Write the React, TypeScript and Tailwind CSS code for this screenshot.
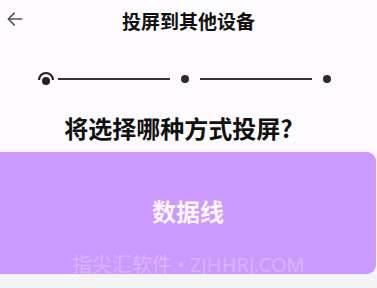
import React from 'react';

const font = { fontFamily: '"Noto Sans CJK SC", "Noto Sans", sans-serif' };

function Stepper() {
  return (
    <div className="flex items-center h-[18px] pl-[36px] pr-[46px]">
      <svg width="20" height="18" viewBox="0 0 20 18" className="shrink-0">
        <path d="M3 10 A7 7 0 0 1 17 10" fill="none" stroke="#222" strokeWidth="2.2" />
        <circle cx="10" cy="11" r="4" fill="#222" />
      </svg>
      <div className="flex-1 h-[2px] bg-[#333] ml-[2px]" />
      <div className="w-[8px] h-[8px] rounded-full bg-[#2a2a2a] mx-[11px]" />
      <div className="flex-1 h-[2px] bg-[#333]" />
      <div className="w-[8px] h-[8px] rounded-full bg-[#2a2a2a] ml-[11px]" />
    </div>
  );
}

export default function App() {
  return (
    <div className="w-[377px] h-[288px] overflow-hidden bg-[#fdfbfd] flex flex-col relative" style={font}>
      {/* header */}
      <div className="h-[38px] flex items-center relative">
        <svg width="20" height="20" viewBox="0 0 24 24" className="absolute left-[5px] top-[9px]" fill="none" stroke="#555" strokeWidth="2" strokeLinecap="round" strokeLinejoin="round">
          <path d="M20 12H5" />
          <path d="M11 5l-7 7 7 7" />
        </svg>
        <div className="flex-1 text-center text-[19px] font-bold text-[#111] leading-none pt-[2px]">投屏到其他设备</div>
      </div>

      <div className="mt-[32px]">
        <Stepper />
      </div>

      <div className="mt-[28px] text-center text-[24px] font-bold text-[#111] leading-none pr-[20px]">将选择哪种方式投屏?</div>

      <div className="mt-[12px] h-[122px] bg-[#cc99ff] rounded-r-[9px] mr-[1px] flex items-center justify-center shadow-[0_-1px_4px_rgba(0,0,0,0.06)]">
        <span className="text-[24px] font-bold text-[#fdf6ff] leading-none mb-[4px]">数据线</span>
      </div>
      <div className="flex-1 bg-[#f4f3f5]" />

      <div className="absolute left-[72px] top-[255px] text-[20px] leading-none text-white/30 whitespace-nowrap" style={{ fontFamily: '"Noto Sans", "Noto Sans CJK SC", sans-serif' }}>
        指尖汇软件 • ZJHHRJ.COM
      </div>
    </div>
  );
}
